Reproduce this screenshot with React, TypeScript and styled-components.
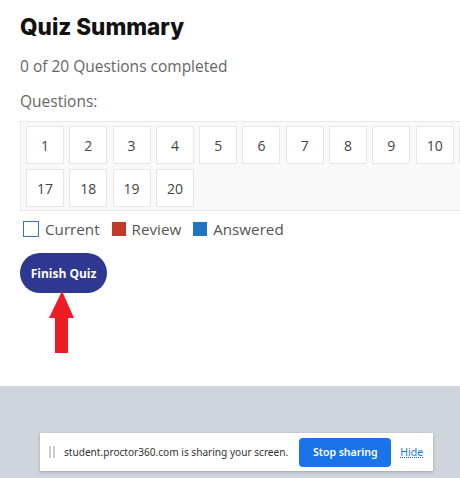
import React from "react";
import styled, { createGlobalStyle } from "styled-components";

const Global = createGlobalStyle`
  html, body { margin: 0; padding: 0; background: #fff; }
  body { width: 460px; height: 478px; overflow: hidden; }
`;

const Page = styled.div`
  width: 460px;
  height: 478px;
  display: flex;
  flex-direction: column;
  overflow: hidden;
`;

const Content = styled.div`
  height: 386px;
  flex: none;
  padding: 10px 0 0 20px;
  box-sizing: border-box;
  background: #fff;
`;

const Title = styled.h2`
  margin: 0;
  font-family: "Inter", sans-serif;
  font-weight: 800;
  font-size: 22.5px;
  line-height: 34px;
  color: #111;
  letter-spacing: 0px;
`;

const Text = styled.p`
  margin: 0;
  font-family: "Open Sans", sans-serif;
  font-size: 15.5px;
  line-height: 20px;
  color: #666;
`;

const Completed = styled(Text)`
  margin-top: 12px;
`;

const QLabel = styled(Text)`
  margin-top: 15px;
`;

const Grid = styled.div`
  margin-top: 10px;
  width: 700px;
  box-sizing: border-box;
  padding: 4px 5px 3px;
  background: #f9f9f9;
  border: 1px solid #e8e8e8;
  display: flex;
  flex-wrap: wrap;
  gap: 5px 5.3px;
`;

const Cell = styled.div`
  width: 38px;
  height: 38px;
  box-sizing: border-box;
  background: #fff;
  border: 1px solid #e6e6e6;
  display: flex;
  align-items: center;
  justify-content: center;
  font-family: "Open Sans", sans-serif;
  font-size: 14px;
  color: #444;
`;

const Legend = styled.div`
  margin-top: 8px;
  display: flex;
  align-items: center;
  font-family: "Open Sans", sans-serif;
  font-size: 15.2px;
  color: #555;
`;

const Item = styled.span`
  display: flex;
  align-items: center;
  margin-right: 9px;
`;

const Swatch = styled.span<{ $fill?: string; $outline?: boolean }>`
  width: ${(p) => (p.$outline ? "16px" : "14px")};
  height: ${(p) => (p.$outline ? "16px" : "14px")};
  box-sizing: border-box;
  margin: 0 6px 0 3px;
  background: ${(p) => (p.$outline ? "#fff" : p.$fill)};
  border: ${(p) => (p.$outline ? "1.5px solid #3b6fd6" : "none")};
`;

const FinishButton = styled.button`
  margin-top: 14px;
  width: 87px;
  height: 40px;
  border: none;
  border-radius: 20px;
  background: #2f3890;
  color: #fff;
  font-family: "Open Sans", sans-serif;
  font-weight: 700;
  font-size: 12px;
  padding: 0;
  display: block;
`;

const Arrow = styled.svg`
  display: block;
  margin: -2px 0 0 28px;
`;

const Gray = styled.div`
  flex: 1;
  background: #d0d4dc;
  display: flex;
  align-items: flex-start;
  padding: 47px 0 0 40px;
`;

const ShareBar = styled.div`
  width: 393px;
  height: 38px;
  box-sizing: border-box;
  background: #fff;
  box-shadow: 0 1px 3px rgba(0, 0, 0, 0.25);
  display: flex;
  align-items: center;
  padding-left: 9px;
  font-family: "Noto Sans", "Open Sans", sans-serif;
  font-size: 10.1px;
  color: #333;
  white-space: nowrap;
`;

const Grip = styled.span`
  width: 6px;
  height: 12px;
  border-left: 2px solid #ccc;
  border-right: 2px solid #ccc;
  box-sizing: border-box;
  margin-right: 9px;
`;

const StopButton = styled.button`
  margin-left: 11px;
  width: 92px;
  height: 29px;
  border: none;
  border-radius: 4px;
  background: #1a73e8;
  color: #fff;
  font-family: "Noto Sans", sans-serif;
  font-weight: 600;
  font-size: 10.5px;
  padding: 0;
  flex: none;
`;

const HideLink = styled.a`
  margin-left: 9px;
  color: #1a73e8;
  font-size: 10.5px;
  text-decoration: underline;
  text-decoration-style: dotted;
`;

export default function App() {
  const nums = Array.from({ length: 20 }, (_, i) => i + 1);
  return (
    <Page>
      <Global />
      <Content>
        <Title>Quiz Summary</Title>
        <Completed>0 of 20 Questions completed</Completed>
        <QLabel>Questions:</QLabel>
        <Grid>
          {nums.map((n) => (
            <Cell key={n}>{n}</Cell>
          ))}
        </Grid>
        <Legend>
          <Item>
            <Swatch $outline />
            Current
          </Item>
          <Item>
            <Swatch $fill="#c0392b" />
            Review
          </Item>
          <Item>
            <Swatch $fill="#1f74c4" />
            Answered
          </Item>
        </Legend>
        <FinishButton>Finish Quiz</FinishButton>
        <Arrow width="28" height="62" viewBox="0 0 28 62">
          <polygon points="14,0 26,27 20,27 20,62 7,62 7,27 1,27" fill="#ed1c24" />
        </Arrow>
      </Content>
      <Gray>
        <ShareBar>
          <Grip />
          <span>student.proctor360.com is sharing your screen.</span>
          <StopButton>Stop sharing</StopButton>
          <HideLink>Hide</HideLink>
        </ShareBar>
      </Gray>
    </Page>
  );
}
